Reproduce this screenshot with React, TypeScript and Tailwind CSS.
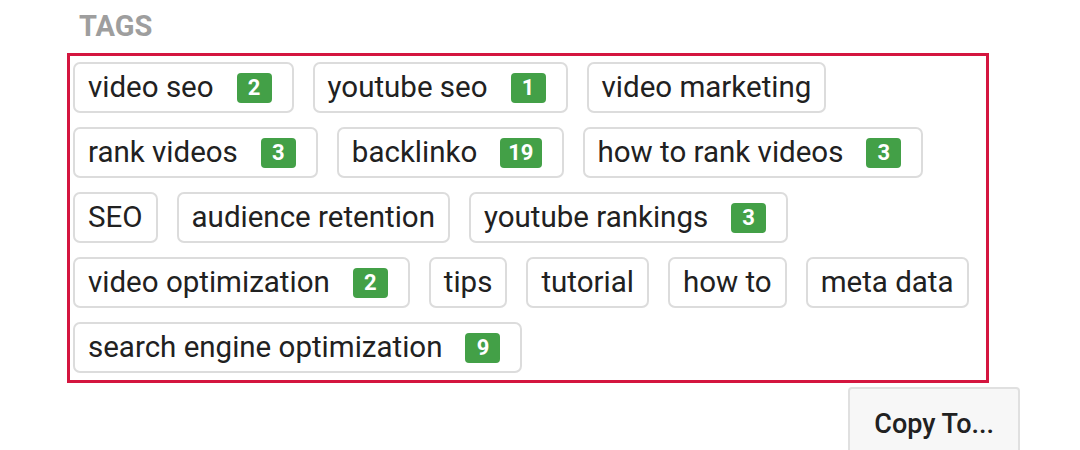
import React from 'react';

interface Tag {
  label: string;
  count?: number;
}

const tags: Tag[] = [
  { label: 'video seo', count: 2 },
  { label: 'youtube seo', count: 1 },
  { label: 'video marketing' },
  { label: 'rank videos', count: 3 },
  { label: 'backlinko', count: 19 },
  { label: 'how to rank videos', count: 3 },
  { label: 'SEO' },
  { label: 'audience retention' },
  { label: 'youtube rankings', count: 3 },
  { label: 'video optimization', count: 2 },
  { label: 'tips' },
  { label: 'tutorial' },
  { label: 'how to' },
  { label: 'meta data' },
  { label: 'search engine optimization', count: 9 },
];

const TagChip: React.FC<{ tag: Tag }> = ({ tag }) => (
  <div
    className={`h-[51px] flex items-center border-2 border-[#dcdcdc] rounded-[7px] bg-white pl-[13px] ${
      tag.count ? 'pr-[20px]' : 'pr-[13px]'
    }`}
  >
    <span className="text-[29.5px] leading-none text-[#212121] whitespace-nowrap">{tag.label}</span>
    {tag.count !== undefined && (
      <span className="ml-[23px] h-[30px] min-w-[35px] px-[8px] rounded-[4px] bg-[#43a047] text-white text-[22px] font-bold leading-none flex items-center justify-center">
        {tag.count}
      </span>
    )}
  </div>
);

export default function App() {
  return (
    <div
      className="w-[1080px] h-[450px] bg-white overflow-hidden"
      style={{ fontFamily: 'Roboto, "Liberation Sans", sans-serif' }}
    >
      <div className="pl-[67px] pt-[12px] w-[1020px]">
        {/* Section label */}
        <div className="ml-[12px] mb-[13px] text-[29px] leading-[28px] font-bold text-[#9e9e9e] uppercase">
          Tags
        </div>

        {/* Highlighted tag list */}
        <div className="w-[922px] border-[3px] border-[#d4163f] pt-[6px] pb-[7px] pl-[3px] pr-[3px]">
          <div className="flex flex-wrap gap-x-[19px] gap-y-[14px]">
            {tags.map((t) => (
              <TagChip key={t.label} tag={t} />
            ))}
          </div>
        </div>

        {/* Footer action */}
        <div className="flex justify-end mt-[4px]">
          <button className="h-[70px] px-[24px] pt-[22px] flex items-start border-2 border-[#e0e0e0] rounded-t-[4px] bg-[#f7f7f7] text-[27px] leading-[27px] font-medium text-[#212121]">
            Copy To...
          </button>
        </div>
      </div>
    </div>
  );
}
